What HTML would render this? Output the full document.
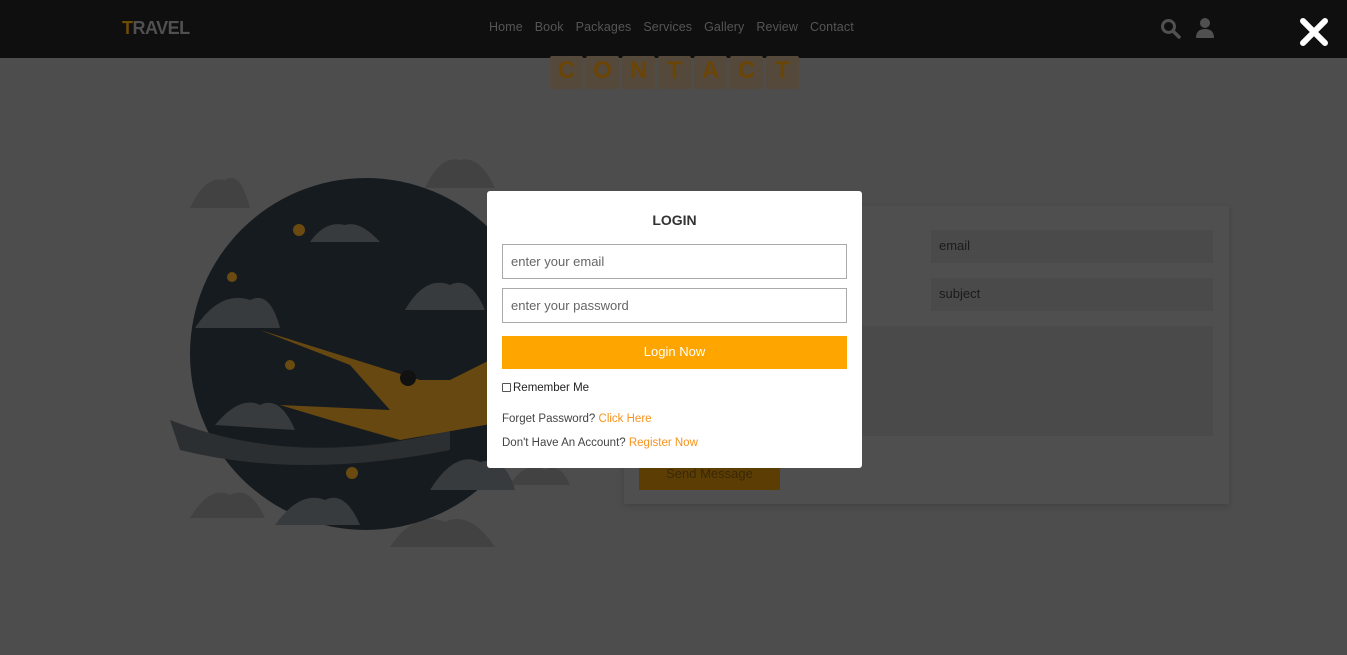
<!DOCTYPE html>
<html><head><meta charset="utf-8"><style>
*{margin:0;padding:0;box-sizing:border-box}
body{width:1347px;height:655px;overflow:hidden;background:#4d4d4d;font-family:"Liberation Sans",sans-serif;position:relative}
.hdr{position:absolute;left:0;top:0;width:1347px;height:58px;background:#0f0f0f}
.logo{position:absolute;left:122px;top:18px;font-size:18px;font-weight:bold;color:#505050;letter-spacing:-0.5px}
.logo b{color:#6e4b06}
.nav{position:absolute;left:489px;top:20px;font-size:12.5px;color:#555;letter-spacing:0.1px}
.nav span{margin-right:12px}
.ct{position:absolute;left:550px;top:56px;display:flex;gap:3px}
.ct div{width:33px;height:33px;background:#54493a;color:#6c4404;font-weight:bold;font-size:24px;text-align:center;line-height:30px;border-radius:2px}
.form{position:absolute;left:624px;top:206px;width:605px;height:298px;background:#4f4f4f;box-shadow:0 2px 6px rgba(0,0,0,.15)}
.fi{position:absolute;background:#4a4a4a;color:#1a1a1a;font-size:13px;padding:8px}
.send{position:absolute;left:639px;top:458px;width:141px;height:32px;background:#5c3e04;color:#3a2805;font-size:13px;text-align:center;line-height:32px}
.modal{position:absolute;left:487px;top:191px;width:375px;height:277px;background:#fff;border-radius:3px}
.modal h3{position:absolute;top:21px;width:100%;text-align:center;font-size:14px;color:#333}
.inp{position:absolute;left:15px;width:345px;height:35px;border:1px solid #aaa;font-size:13px;color:#666;padding:9px 8px}
.btn{position:absolute;left:15px;top:145px;width:345px;height:33px;background:#ffa500;color:#fff;font-size:13px;text-align:center;line-height:31px}
.sm{position:absolute;left:15px;font-size:11.5px;color:#444}
.sm a{color:#f7931e;text-decoration:none}
.cb{display:inline-block;width:9px;height:9px;border:1px solid #555;border-radius:1px;vertical-align:-1px;margin-right:2px}
</style></head><body>
<div class="hdr">
<div class="logo"><b>T</b>RAVEL</div>
<div class="nav"><span>Home</span><span>Book</span><span>Packages</span><span>Services</span><span>Gallery</span><span>Review</span><span>Contact</span></div>
<svg style="position:absolute;left:1160px;top:18px" width="22" height="22" viewBox="0 0 22 22"><circle cx="8.5" cy="8.5" r="6" stroke="#505050" stroke-width="3" fill="none"/><line x1="13" y1="13" x2="19" y2="19" stroke="#505050" stroke-width="3.5" stroke-linecap="round"/></svg>
<svg style="position:absolute;left:1195px;top:17px" width="20" height="22" viewBox="0 0 20 22"><circle cx="10" cy="6" r="5" fill="#505050"/><path d="M1 21 Q1 12 10 12 Q19 12 19 21Z" fill="#505050"/></svg>
<svg style="position:absolute;left:1299px;top:17px" width="30" height="30" viewBox="0 0 30 30"><path d="M4 4L26 26M26 4L4 26" stroke="#fff" stroke-width="6" stroke-linecap="round"/></svg>
</div>
<div class="ct"><div>C</div><div>O</div><div>N</div><div>T</div><div>A</div><div>C</div><div>T</div></div>
<svg style="position:absolute;left:150px;top:150px" width="420" height="410" viewBox="0 0 420 410">
<g fill="#424242"><path d="M40 58 Q55 25 75 30 Q90 20 100 58Z"/><path d="M275 38 Q290 5 310 10 Q330 5 345 38Z"/><path d="M40 368 Q60 335 80 345 Q100 335 115 368Z"/><path d="M240 397 Q265 360 295 372 Q320 360 345 397Z"/><path d="M360 335 Q375 310 395 320 Q410 312 420 335Z"/></g>
<circle cx="216" cy="204" r="176" fill="#161b1f"/>
<g fill="#383b3e"><path d="M160 92 Q175 70 195 75 Q210 70 230 92Z"/><path d="M255 160 Q275 125 300 135 Q320 125 335 160Z"/><path d="M45 178 Q70 140 100 150 Q120 140 130 178Z"/><path d="M65 275 Q90 245 110 255 Q130 245 145 280Z"/><path d="M125 375 Q150 340 175 350 Q195 340 210 375Z"/><path d="M280 340 Q305 300 330 312 Q355 305 365 340Z"/></g>
<path d="M20 270 Q150 320 300 280 L300 300 Q150 330 30 300Z" fill="#2c2f31"/>
<path d="M110 180 L270 230 L300 230 L340 210 L420 200 L420 260 L250 290 L180 270 L130 255 L240 260 L200 215Z" fill="#674811"/>
<circle cx="258" cy="228" r="8" fill="#111"/>
<g fill="#6a4a10"><circle cx="149" cy="80" r="6"/><circle cx="82" cy="127" r="5"/><circle cx="140" cy="215" r="5"/><circle cx="202" cy="323" r="6"/></g>
</svg>
<div class="form">
<div class="fi" style="left:307px;top:24px;width:282px;height:33px">email</div>
<div class="fi" style="left:307px;top:72px;width:282px;height:33px">subject</div>
<div class="fi" style="left:15px;top:120px;width:574px;height:110px"></div>
</div>
<div class="send">Send Message</div>
<div class="modal">
<h3>LOGIN</h3>
<div class="inp" style="top:53px">enter your email</div>
<div class="inp" style="top:97px">enter your password</div>
<div class="btn">Login Now</div>
<div class="sm" style="top:191px;color:#222"><span class="cb"></span>Remember Me</div>
<div class="sm" style="top:222px">Forget Password? <a>Click Here</a></div>
<div class="sm" style="top:246px">Don't Have An Account? <a>Register Now</a></div>
</div>
</body></html>
